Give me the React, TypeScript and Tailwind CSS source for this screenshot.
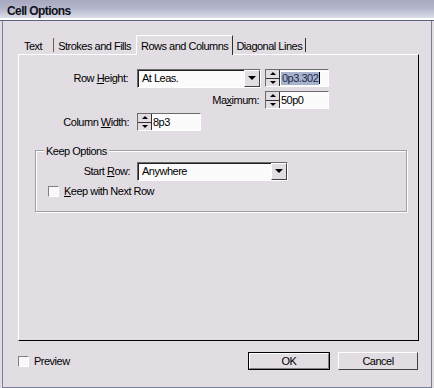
import React from 'react';

const font = { fontFamily: '"Liberation Sans", Arial, sans-serif' };

function Spinner({ value, selected = false, width = 'w-[63px]' }: { value: string; selected?: boolean; width?: string }) {
  return (
    <div className={`flex h-[18px] ${width} border-t border-l border-[#6b6b6b] border-b border-r border-b-white border-r-white bg-[#fbfbfb]`}>
      <div className="flex flex-col w-[14px] h-full border-r border-[#303030]">
        <div className="flex-1 flex items-center justify-center bg-[#e2dde3] border-b border-[#303030]">
          <div className="w-0 h-0 border-l-[3px] border-r-[3px] border-b-[3px] border-l-transparent border-r-transparent border-b-black" />
        </div>
        <div className="flex-1 flex items-center justify-center bg-[#e2dde3]">
          <div className="w-0 h-0 border-l-[3px] border-r-[3px] border-t-[3px] border-l-transparent border-r-transparent border-t-black" />
        </div>
      </div>
      <div className="flex items-center pl-[1px]">
        <span className={selected ? 'bg-[#a8b2cc] text-[#1c2a4c] px-[1px] leading-[13px]' : 'leading-[13px]'}>{value}</span>
        {selected && <span className="w-[1px] h-[12px] bg-black" />}
      </div>
    </div>
  );
}

function Select({ value, width }: { value: string; width: string }) {
  return (
    <div className={`flex h-[19px] ${width} border-t border-l border-[#6b6b6b] border-b border-r border-b-white border-r-white bg-[#fbfbfb]`}>
      <div className="flex-1 flex items-center pl-[3px] border-t border-l border-[#202020] h-full">{value}</div>
      <div className="flex items-center justify-center w-[16px] h-full border-t border-l border-t-white border-l-white border-r border-b border-r-[#404040] border-b-[#404040] bg-[#e2dde3]">
        <div className="w-0 h-0 border-l-[4px] border-r-[4px] border-t-[4px] border-l-transparent border-r-transparent border-t-black" />
      </div>
    </div>
  );
}

function Checkbox() {
  return <div className="w-[11px] h-[11px] border-t border-l border-[#808080] border-b border-r border-b-white border-r-white bg-[#f8f8f8]" />;
}

export default function App() {
  return (
    <div style={font} className="w-[434px] h-[388px] bg-[#e2dde3] text-[11px] tracking-[-0.5px] text-black overflow-hidden">
      <div className="h-[18px] bg-gradient-to-b from-[#a8a8c0] via-[#b4b8cc] to-[#dcdee8] flex items-center pl-[7px] pt-[4px]">
        <span className="font-bold text-[12px] tracking-[-0.6px] text-[#101018]">Cell Options</span>
      </div>
      <div className="h-[2px] bg-white" />
      <div className="h-[1px] bg-[#5a647c]" />
      <div className="h-[367px] mx-[2px] mb-[2px] border-l border-r border-b border-[#7a8098] flex flex-col">
        <div className="flex items-end h-[33px] pl-[15px]">
          <div className="flex items-center h-[15px] mb-[2px]">
            <span className="pl-[6px] pr-[11px] pt-[3px]">Text</span>
            <span className="w-[1px] h-[14px] bg-[#6a6050]" />
            <span className="pl-[4px] pr-[5px] pt-[3px]">Strokes and Fills</span>
          </div>
          <div className="flex items-center h-[20px] px-[4px] pt-[2px] bg-[#e2dde3] border-t border-l border-white border-r border-r-[#303030] -mb-[1px] relative z-10">
            Rows and Columns
          </div>
          <div className="flex items-center h-[15px] mb-[2px]">
            <span className="pl-[3px] pr-[3px] pt-[3px]">Diagonal Lines</span>
            <span className="w-[1px] h-[14px] bg-[#303030]" />
          </div>
        </div>
        <div className="ml-[15px] w-[401px] h-[287px] border-t border-l border-white border-r border-b border-r-black border-b-black flex flex-col pt-[13px]">
          <div className="flex items-center h-[20px]">
            <span className="w-[118px] text-right pr-[9px]">Row <u>H</u>eight:</span>
            <Select value="At Leas." width="w-[124px]" />
            <div className="ml-[4px]"><Spinner value="0p3.302" selected width="w-[64px]" /></div>
          </div>
          <div className="flex items-center h-[20px] mt-[2px]">
            <span className="w-[246px] text-right pr-[6px]">Ma<u>x</u>imum:</span>
            <Spinner value="50p0" width="w-[64px]" />
          </div>
          <div className="flex items-center h-[20px] mt-[2px]">
            <span className="w-[118px] text-right pr-[8px]">Column <u>W</u>idth:</span>
            <Spinner value="8p3" width="w-[64px]" />
          </div>
          <div className="relative ml-[16px] mt-[18px] w-[372px] h-[62px] border-t border-l border-[#a0a0a0] border-b border-r border-b-[#a0a0a0] border-r-[#a0a0a0] shadow-[1px_1px_0_#fff,inset_1px_1px_0_#fff] flex flex-col">
            <span className="absolute -top-[8px] left-[8px] px-[2px] bg-[#e2dde3]">Keep Options</span>
            <div className="flex items-center mt-[10px] h-[20px]">
              <span className="w-[101px] text-right pr-[7px]">Start <u>R</u>ow:</span>
              <Select value="Anywhere" width="w-[151px]" />
            </div>
            <div className="flex items-center mt-[2px] pl-[12px] gap-[5px]">
              <Checkbox />
              <span><u>K</u>eep with Next Row</span>
            </div>
          </div>
        </div>
        <div className="flex items-center h-[26px] mt-[7px] pl-[15px] pr-[13px]">
          <Checkbox />
          <span className="ml-[5px]">Preview</span>
          <div className="flex-1" />
          <div className="w-[82px] h-[18px] border border-black flex">
            <div className="flex-1 flex items-center justify-center border-t border-l border-white border-r border-b border-r-[#808080] border-b-[#808080]">OK</div>
          </div>
          <div className="ml-[8px] w-[80px] h-[18px] flex items-center justify-center border-t border-l border-white border-r border-b border-r-[#404040] border-b-[#404040]">Cancel</div>
        </div>
      </div>
    </div>
  );
}
